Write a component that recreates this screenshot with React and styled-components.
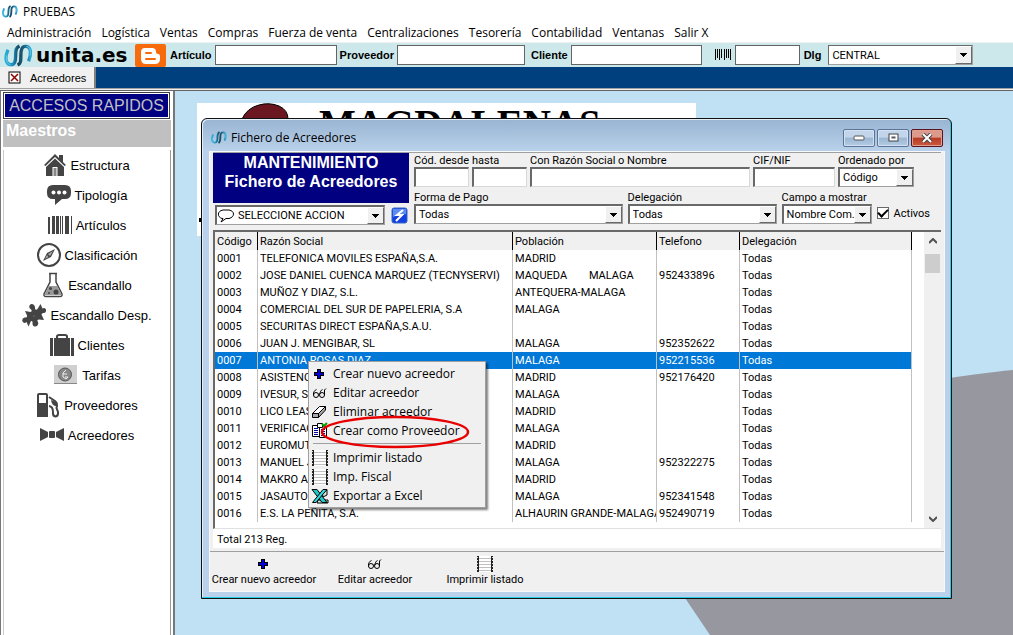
import React, { useState } from "react";
import styled, { createGlobalStyle } from "styled-components";

const ui = `"Open Sans", "Noto Sans", sans-serif`;
const arial = `"Liberation Sans", Arial, sans-serif`;
const small = `Roboto, ${arial}`;

const GlobalStyle = createGlobalStyle`
  * {
    box-sizing: border-box;
  }
  body {
    margin: 0;
    font-family: ${arial};
    font-size: 11px;
    color: #000;
    background: #fff;
  }
  button, input, select {
    font: inherit;
    color: inherit;
    margin: 0;
    border-radius: 0;
  }
  svg {
    display: block;
    flex: none;
  }
`;

const Page = styled.div`
  min-height: 100vh;
  display: flex;
  flex-direction: column;
  overflow: hidden;
`;

const TitleBar = styled.header`
  display: flex;
  align-items: center;
  gap: 5px;
  height: 23px;
  padding: 0 2px;
  font-family: ${ui};
  font-size: 12px;
`;

const MenuBar = styled.nav`
  display: flex;
  height: 20px;
  padding-left: 7px;
  gap: 10px;
  line-height: 19px;
  font-family: ${ui};
  font-size: 12px;
  border-bottom: 1px solid #f0f0f0;

  a {
    color: inherit;
    text-decoration: none;
    white-space: nowrap;
  }
`;

const ToolBar = styled.div`
  display: flex;
  align-items: center;
  height: 24px;
  padding-left: 4px;
  background: #cde8eb;
`;

const Brand = styled.span`
  width: 96px;
  margin: 0 3px;
  font-family: "DejaVu Sans", sans-serif;
  font-size: 20px;
  font-weight: bold;
  line-height: 20px;
`;

const Blogger = styled.a`
  margin-right: 4px;
`;

const SearchLabel = styled.label`
  display: flex;
  align-items: center;
  gap: 3px;
  margin-right: ${p => p.gap || 3}px;
  font-size: 11px;
  font-weight: bold;
`;

const SearchInput = styled.input`
  width: ${p => p.w}px;
  height: 20px;
  border: 1px solid #646464;
  background: #fff;
  padding: 0 4px;
`;

const SelectFrame = styled.span`
  display: flex;
  width: ${p => (p.w ? `${p.w}px` : "100%")};
  height: 20px;
  background: #fff;
  border: 1px solid;
  border-width: ${p => (p.flat ? "1px" : "2px 1px 1px 2px")};
  border-color: #696969 #a0a0a0 #a0a0a0 #696969;
  align-items: center;
`;

const SelectBox = styled.select`
  appearance: none;
  flex: 1;
  min-width: 0;
  height: 100%;
  border: 0;
  padding: 0 0 0 3px;
  background: transparent;
  font-family: ${small};
  outline: none;
`;

const SelectArrow = styled.span`
  width: 17px;
  height: 100%;
  display: flex;
  align-items: center;
  justify-content: center;
  background: #f0f0f0;
  border: 1px solid;
  border-color: #fff #696969 #696969 #fff;
`;

const TabBar = styled.div`
  display: flex;
  height: 21px;
  background: #00407f;
`;

const Tab = styled.button`
  display: flex;
  align-items: center;
  width: 96px;
  gap: 9px;
  padding: 0 0 0 8px;
  border: 0;
  border-right: 2px solid #808080;
  background: #f0f0f0;
  font-size: 11px;
`;

const Rule = styled.div`
  height: 3px;
  border: 1px solid;
  border-width: 1px 0;
  border-color: #a0a0a0 transparent #646464;
  background: #f0f0f0;
`;

const Body = styled.div`
  flex: 1;
  display: flex;
`;

const SideBar = styled.aside`
  width: 175px;
  flex: none;
  padding: 1px 0 0 2px;
  border: solid #777;
  border-width: 0 2px 0 1px;
`;

const SideTitle = styled.h1`
  margin: 0 3px 0 0;
  height: 27px;
  line-height: 26px;
  text-align: center;
  border: 1px solid #404040;
  box-shadow: inset 0 0 0 1px #fff;
  background: #000080;
  color: #c0c0c0;
  font-size: 16px;
  font-weight: normal;
  white-space: nowrap;
`;

const SideGroup = styled.h2`
  margin: 1px 2px 3px 0;
  height: 27px;
  padding: 2px 3px;
  line-height: 18px;
  background: #c0c0c0;
  color: #fff;
  font-size: 16px;
`;

const SideList = styled.div`
  display: flex;
  flex-direction: column;
  margin-right: 2px;
  min-height: 488px;
  border-right: 1px solid #999;
  border-left: 1px solid #ccc;
`;

const SideLink = styled.a`
  display: flex;
  align-items: center;
  justify-content: center;
  gap: 4px;
  height: 30px;
  color: #000;
  font-size: 13px;
  text-decoration: none;
`;

const Desktop = styled.main`
  flex: 1;
  position: relative;
  background: #bfe1f3;
`;

const Wallpaper = styled.svg`
  position: absolute;
  left: 0;
  top: 0;
`;

const Window = styled.section`
  position: absolute;
  left: 26px;
  right: 61px;
  top: 27px;
  padding: 0 6px 6px 7px;
  border: 1px solid #111;
  border-radius: 6px 6px 0 0;
  box-shadow: inset -1px -1px 0 #22cfe6, inset 1px 1px 0 #e4eef8;
  background: linear-gradient(#98b4d2, #b9d1ea 32px);
  font-family: ${small};
`;

const WindowTitle = styled.div`
  display: flex;
  align-items: center;
  gap: 4px;
  height: 32px;
  padding: 5px 0 0 2px;
  font-family: ${ui};
  font-size: 12px;

  span {
    flex: 1;
  }
`;

const WindowButton = styled.button`
  display: flex;
  align-items: center;
  justify-content: center;
  width: 32px;
  height: 18px;
  margin-left: -2px;
  margin-right: ${p => (p.close ? 2 : 0)}px;
  padding: 0;
  border: 1px solid ${p => (p.close ? "#5a1420" : "#5c7596")};
  border-radius: 2px;
  box-shadow: inset 0 0 0 1px ${p => (p.close ? "#e0a090" : "#d3e2f2")};
  background: ${p =>
    p.close
      ? "linear-gradient(#dc9a8c 45%, #b83a24 50%, #cc5a40)"
      : "linear-gradient(#c2d5ea 45%, #9bb6d3 50%, #b4cce4)"};
`;

const Client = styled.div`
  background: #f0f0f0;
  border: 1px solid #f8f8f8;
`;

const Filters = styled.div`
  display: flex;
  margin: 0 3px;
  padding-bottom: 5px;
  border-top: 1px solid #a0a0a0;
`;

const FilterHead = styled.div`
  width: 196px;
  flex: none;
`;

const Heading = styled.h2`
  margin: 0 0 2px;
  height: 50px;
  background: #000080;
  color: #fff;
  font-family: ${arial};
  font-size: 16px;
  line-height: 19px;
  text-align: center;
`;

const ActionRow = styled.div`
  display: flex;
  align-items: center;
  gap: 6px;
  padding-left: 2px;
`;

const IconButton = styled.button`
  padding: 0;
  border: 0;
  background: none;
`;

const FilterFields = styled.div`
  flex: 1;
  display: flex;
  flex-direction: column;
  gap: 5px;
  padding: 2px 27px 0 5px;
`;

const FilterRow = styled.div`
  display: flex;
  gap: ${p => p.gap}px;
  margin-right: ${p => (p.wide ? -16 : 0)}px;
`;

const Field = styled.label`
  display: flex;
  flex-direction: column;
  flex: ${p => (p.w ? "none" : 1)};
  width: ${p => (p.w ? `${p.w}px` : "auto")};
  min-width: 0;
  line-height: 12px;
  white-space: nowrap;
`;

const TextBox = styled.input`
  width: 100%;
  height: 20px;
  padding: 0 3px;
  background: #fff;
  border: 1px solid;
  border-width: 2px 1px 1px 2px;
  border-color: #696969 #d8d8d8 #d8d8d8 #696969;
`;

const Check = styled.label`
  display: flex;
  align-items: center;
  gap: 5px;
  padding-top: 10px;
`;

const CheckBox = styled.input`
  appearance: none;
  width: 12px;
  height: 12px;
  border: 1px solid #696969;
  background: #fff;
  display: grid;
  place-items: center;

  &:checked::before {
    content: "";
    width: 8px;
    height: 4px;
    border: solid #000;
    border-width: 0 0 2px 2px;
    transform: rotate(-45deg);
    margin-bottom: 3px;
  }
`;

const Grid = styled.div`
  display: flex;
  margin: 0 3px;
  height: 299px;
  border: solid #696969;
  border-width: 2px 0 0 2px;
  background: #fff;
  border-bottom: 1px solid #e0e0e0;
`;

const TableArea = styled.div`
  flex: 1;
  min-width: 0;
`;

const Table = styled.table`
  width: 100%;
  table-layout: fixed;
  border-collapse: separate;
  border-spacing: 0;

  th,
  td {
    height: 17px;
    padding: 0 0 0 2px;
    line-height: 17px;
    text-align: left;
    font-weight: normal;
    white-space: pre;
    overflow: hidden;
    border-right: 1px solid #c0c0c0;
  }

  th {
    height: 18px;
    background: #f0f0f0;
    border-right-color: #000;
  }
`;

const Row = styled.tr`
  color: ${p => (p.selected ? "#fff" : "#000")};
  background: ${p => (p.selected ? "#0078d7" : "transparent")};
`;

const ScrollBar = styled.div`
  display: flex;
  flex-direction: column;
  align-items: center;
  width: 17px;
  margin-left: 12px;
  padding: 6px 0;
  background: #f0f0f0;
`;

const Thumb = styled.div`
  width: 15px;
  height: 19px;
  margin: 10px 0 auto;
  background: #cdcdcd;
`;

const Total = styled.div`
  height: 19px;
  margin: 0 3px 3px;
  padding-left: 4px;
  line-height: 22px;
  background: #fff;
`;

const Actions = styled.div`
  display: flex;
  border-top: 1px solid #a0a0a0;
  padding: 3px 2px 4px 1px;
`;

const ActionButton = styled.button`
  display: flex;
  flex-direction: column;
  align-items: center;
  width: 106px;
  margin-right: ${p => p.gap}px;
  padding: 0;
  border: 0;
  background: none;
  line-height: 14px;
  white-space: nowrap;
`;

const ContextMenu = styled.div`
  position: absolute;
  left: 106px;
  top: 242px;
  width: 178px;
  padding: 2px;
  border: 1px solid #a0a0a0;
  box-shadow: 2px 2px 2px rgba(0, 0, 0, 0.5);
  background: #f0f0f0;
  font-family: ${ui};
  font-size: 12px;
`;

const MenuItem = styled.button`
  display: flex;
  align-items: center;
  gap: 4px;
  width: 100%;
  height: 19px;
  padding: 0;
  border: 0;
  background: none;
  white-space: nowrap;
`;

const Separator = styled.div`
  height: 1px;
  margin: 3px 2px 4px;
  background: #a0a0a0;
`;

const Mark = styled.svg`
  position: absolute;
  left: 11px;
  top: 53px;
`;

function Logo({ w, h, id }) {
  return (
    <svg width={w} height={h} viewBox="0 0 30 24">
      <defs>
        <linearGradient id={`${id}u`} x1="0" y1="0" x2="1" y2="0">
          <stop offset="0" stopColor="#2badd8" />
          <stop offset="0.5" stopColor="#1f8fbf" />
          <stop offset="1" stopColor="#123f57" />
        </linearGradient>
        <linearGradient id={`${id}n`} x1="0" y1="0" x2="1" y2="0">
          <stop offset="0" stopColor="#173f52" />
          <stop offset="0.5" stopColor="#1c6282" />
          <stop offset="1" stopColor="#2ba5d2" />
        </linearGradient>
      </defs>
      <path
        d="M4 6C1 13 1 21 6.500 21.500C11.500 22 12 17 12 12C12 6 12.500 3.500 16 2"
        fill="none"
        stroke={`url(#${id}u)`}
        strokeWidth="3.500"
      />
      <path
        d="M14 22C17.500 20.500 17.500 18 17.500 12C17.500 6 18.500 2 23 2.500C28.500 3 28.500 11 25.500 18"
        fill="none"
        stroke={`url(#${id}n)`}
        strokeWidth="3.500"
      />
      <path d="M3 12C2 17 3 21 6.500 21.500M27 12C28 7 27 3 23.500 2.500" fill="none" stroke="#6fd0ec" />
    </svg>
  );
}

const Down = () => (
  <svg width="7" height="4" shapeRendering="crispEdges">
    <path d="M0 0H7L3.500 4Z" />
  </svg>
);

function Select({ value, w, flat, icon, ...props }) {
  return (
    <SelectFrame w={w} flat={flat}>
      {icon}
      <SelectBox defaultValue={value} {...props}>
        <option>{value}</option>
      </SelectBox>
      <SelectArrow>
        <Down />
      </SelectArrow>
    </SelectFrame>
  );
}

const Balloon = () => (
  <svg width="18" height="15" viewBox="0 0 18 15" fill="#fff" stroke="#000">
    <path d="M5 10.500C0 9 0 3 6 2H12C18 3 18 9 12 10.500H9L4 14L6 10.500Z" />
  </svg>
);

const Plus = () => (
  <svg width="18" height="18" viewBox="4 0 18 18" shapeRendering="crispEdges">
    <path d="M10 4H14V7H17V11H14V14H10V11H7V7H10Z" fill="#000" />
    <path d="M11 5H13V8H16V10H13V13H11V10H8V8H11Z" fill="#0000d0" />
  </svg>
);

const Glasses = () => (
  <svg width="18" height="18" viewBox="4 0 18 18" fill="none" stroke="#000">
    <circle cx="9" cy="11" r="2.500" />
    <circle cx="15" cy="11" r="2.500" />
    <path d="M6.500 11C6 8 8 6 9.500 5.500M17.500 11V6L19 4.500M11.500 10H12.500M13 10C13 8 14 6 15.500 5.500" />
  </svg>
);

const Eraser = () => (
  <svg width="18" height="18" viewBox="4 0 18 18" stroke="#000">
    <path d="M5.500 10.500L12.500 3.500H18.500L11.500 10.500Z" fill="#fff" />
    <path d="M5.500 10.500H11.500V14.500H5.500ZM11.500 10.500L18.500 3.500V7L11.500 14.500Z" fill="#aaa" />
  </svg>
);

const Cards = () => (
  <svg width="18" height="18" viewBox="4 0 18 18">
    <path d="M5.500 3.500H12.500V14.500H5.500Z" fill="#fff" stroke="#000" />
    <path d="M12.500 4.500H19.500V15.500H12.500Z" fill="#fff" stroke="#000" />
    <path d="M7 6.500H11M7 8.500H11M7 10.500H11M7 12.500H11M14 7.500H18M14 9.500H18M14 11.500H18M14 13.500H18" stroke="#0000a0" />
    <path d="M10.500 1.500H15.500V5.500H10.500Z" fill="#fff" stroke="#000" />
    <path d="M15 2L17 4L20 1" fill="none" stroke="#00a000" strokeWidth="2" />
  </svg>
);

const Listing = () => (
  <svg width="18" height="18" viewBox="3 0 18 18" shapeRendering="crispEdges">
    <path d="M4 1H20V17H4Z" fill="#fff" />
    <path d="M6 3.500H18M6 6.500H18M6 9.500H18M6 12.500H18M6 15.500H18" stroke="#c0c0c0" />
    <path d="M4 1H6V17H4ZM18 1H20V17H18Z" fill="#222" />
    <path d="M4.500 2V17M19.500 2V17" stroke="#ddd" strokeDasharray="1 2" />
  </svg>
);

const Excel = () => (
  <svg width="18" height="18" viewBox="3 0 18 18">
    <path d="M10 13H20V16H9ZM14 5L19 3V8L15 10Z" fill="#d8e4e0" stroke="#000" />
    <path d="M4 2.500H9L19 15.500H14Z" fill="#20c8c8" stroke="#000" />
    <path d="M15 2.500H19L8 15.500H4.500Z" fill="#30dada" stroke="#000" />
  </svg>
);

const ink = "#444";

const House = () => (
  <svg width="22" height="24" viewBox="0 0 22 24" fill={ink}>
    <path d="M15 2H19V9L22 12L20.500 13L11 4L1.500 13L0 12L11 1L15 5Z" />
    <path d="M2 14L11 5.500L20 14V23H13.500V14H8.500V23H2Z" />
    <path d="M9.500 15H12.500V23H9.500Z" fill="#888" />
  </svg>
);

const Chat = () => (
  <svg width="24" height="24" viewBox="0 0 24 24" fill={ink}>
    <path d="M6 2H18Q24 2 24 8V10Q24 16 18 16H15L8 22V16H6Q0 16 0 10V8Q0 2 6 2Z" />
    <g fill="#fff">
      <circle cx="6.500" cy="9.500" r="2" />
      <circle cx="12" cy="9.500" r="2" />
      <circle cx="17.500" cy="9.500" r="2" />
    </g>
  </svg>
);

const Bars = () => (
  <svg width="24" height="24" viewBox="0 0 24 24" fill={ink} shapeRendering="crispEdges">
    <path d="M0 4H2V21H0ZM4 3H7V21H4ZM8 3H11V21H8ZM12 3H13V21H12ZM14 3H15V21H14ZM17 3H21V21H17ZM23 3H24V21H23Z" />
  </svg>
);

const Compass = () => (
  <svg width="24" height="24" viewBox="0 0 24 24">
    <circle cx="12" cy="12" r="11" fill="#fff" stroke={ink} strokeWidth="2" />
    <path d="M18 6L14 14L6 18L10 10Z" fill={ink} />
    <path d="M16 8L11 11L13 13ZM8 16L10 12L11.500 14Z" fill="#aaa" />
  </svg>
);

const Flask = () => (
  <svg width="22" height="26" viewBox="0 0 22 26">
    <path d="M8 2V10L2 22Q1.500 24.500 4 24.500H18Q20.500 24.500 20 22L14 10V2" fill="#fff" stroke={ink} strokeWidth="1.500" />
    <path d="M6.500 14H15.500L19.500 23H2.500Z" fill="#999" />
    <path d="M7 1.500H15" stroke={ink} strokeWidth="1.500" />
    <g fill={ink}>
      <circle cx="8.500" cy="16.500" r="1.500" />
      <circle cx="14" cy="20" r="2.500" />
      <circle cx="7" cy="21" r="1" />
    </g>
  </svg>
);

const Puzzle = () => (
  <svg width="24" height="24" viewBox="0 0 24 24" fill={ink}>
    <path d="M3 8L8.500 9Q10.500 8 9 6.500Q6.500 5 7.500 2.500Q9.500 0 12 2Q13.500 4 13 6Q14 7.500 15.500 6L18.500 1L20.500 5.500Q23 4 24 6.500Q24.500 9.500 22 10Q20 9.500 19.500 11.500L22 17L16.500 16.500Q14.500 17 16 19Q17 22 14 23.500Q10.500 24 10.500 20.500Q11 17.500 9 18L6.500 23.500L4.500 19Q2 21 0.500 18.500Q-0.500 15.500 2.500 14.500Q5.500 15 5 12.500Z" />
    <path d="M10.500 12.500L13 11.500L13.500 14L11 14.500Z" fill="#555" />
  </svg>
);

const Suitcase = () => (
  <svg width="24" height="24" viewBox="0 0 24 24" fill={ink}>
    <path d="M0 5H3V23H0ZM4 5H20V23H4ZM21 5H24V23H21Z" />
    <path d="M7 5V3.500Q7 2 9 2H15Q17 2 17 3.500V5" fill="none" stroke={ink} strokeWidth="2" />
  </svg>
);

const Coin = () => (
  <svg width="25" height="20" viewBox="0 0 25 20">
    <path d="M1 0H24V18H1Z" fill="#d0d0d0" />
    <path d="M1 18.500H24" stroke="#888" />
    <circle cx="12" cy="9.500" r="6.500" fill="#888" stroke="#555" />
    <path d="M13 5L10 8V12L13 14L15 12H12M10 9H14" fill="none" stroke="#eee" />
  </svg>
);

const Pump = () => (
  <svg width="24" height="26" viewBox="0 0 24 26">
    <path d="M1 3Q1 1 3 1H10Q12 1 12 3V25H1Z" fill={ink} />
    <path d="M3 3H10V11H3Z" fill="#fff" />
    <path d="M13 5L19 9Q22 11 20.500 16L22 20Q22.500 24 19.500 24.500Q16.500 24 17 20Q17 14.500 13 14" fill="none" stroke={ink} strokeWidth="2" />
    <path d="M15 8L20 10V14Q16 14 15 8Z" fill={ink} />
  </svg>
);

const Bow = () => (
  <svg width="24" height="24" viewBox="0 0 24 24" fill={ink}>
    <path d="M0 5L8 9V14L0 18ZM24 5L16 9V14L24 18Z" />
    <rect x="9" y="8" width="6" height="7" rx="1" />
  </svg>
);

const menus = [
  "Administración",
  "Logística",
  "Ventas",
  "Compras",
  "Fuerza de venta",
  "Centralizaciones",
  "Tesorería",
  "Contabilidad",
  "Ventanas",
  "Salir X"
];

const shortcuts = [
  ["Estructura", House],
  ["Tipología", Chat],
  ["Artículos", Bars],
  ["Clasificación", Compass],
  ["Escandallo", Flask],
  ["Escandallo Desp.", Puzzle],
  ["Clientes", Suitcase],
  ["Tarifas", Coin],
  ["Proveedores", Pump],
  ["Acreedores", Bow]
];

const rows = [
  ["0001", "TELEFONICA MOVILES ESPAÑA,S.A.", "MADRID", ""],
  ["0002", "JOSE DANIEL CUENCA MARQUEZ (TECNYSERVI)", "MAQUEDA        MALAGA", "952433896"],
  ["0003", "MUÑOZ Y DIAZ, S.L.", "ANTEQUERA-MALAGA", ""],
  ["0004", "COMERCIAL DEL SUR DE PAPELERIA, S.A", "MALAGA", ""],
  ["0005", "SECURITAS DIRECT ESPAÑA,S.A.U.", "", ""],
  ["0006", "JUAN J. MENGIBAR, SL", "MALAGA", "952352622"],
  ["0007", "ANTONIA ROSAS DIAZ", "MALAGA", "952215536"],
  ["0008", "ASISTENC", "MADRID", "952176420"],
  ["0009", "IVESUR, S", "MALAGA", ""],
  ["0010", "LICO LEAS", "MADRID", ""],
  ["0011", "VERIFICAC", "MALAGA", ""],
  ["0012", "EUROMUT", "MADRID", ""],
  ["0013", "MANUEL J", "MALAGA", "952322275"],
  ["0014", "MAKRO A", "MADRID", ""],
  ["0015", "JASAUTO", "MALAGA", "952341548"],
  ["0016", "E.S. LA PEÑITA, S.A.", "ALHAURIN GRANDE-MALAGA", "952490719"]
];

function Suppliers() {
  const [selected, setSelected] = useState("0007");
  return (
    <Grid>
      <TableArea>
        <Table>
          <colgroup>
            <col style={{ width: 43 }} />
            <col style={{ width: 255 }} />
            <col style={{ width: 144 }} />
            <col style={{ width: 83 }} />
            <col />
          </colgroup>
          <thead>
            <tr>
              <th>Código</th>
              <th>Razón Social</th>
              <th>Población</th>
              <th>Telefono</th>
              <th>Delegación</th>
            </tr>
          </thead>
          <tbody>
            {rows.map(([code, name, town, phone]) => (
              <Row key={code} selected={code === selected} onClick={() => setSelected(code)}>
                <td>{code}</td>
                <td>{name}</td>
                <td>{town}</td>
                <td>{phone}</td>
                <td>Todas</td>
              </Row>
            ))}
          </tbody>
        </Table>
      </TableArea>
      <ScrollBar>
        <svg width="8" height="6" fill="none" stroke="#505050" strokeWidth="2">
          <path d="M0 5L4 1L8 5" />
        </svg>
        <Thumb />
        <svg width="8" height="6" fill="none" stroke="#505050" strokeWidth="2">
          <path d="M0 1L4 5L8 1" />
        </svg>
      </ScrollBar>
    </Grid>
  );
}

function Popup() {
  return (
    <ContextMenu>
      <MenuItem><Plus />Crear nuevo acreedor</MenuItem>
      <MenuItem><Glasses />Editar acreedor</MenuItem>
      <MenuItem><Eraser />Eliminar acreedor</MenuItem>
      <MenuItem><Cards />Crear como Proveedor</MenuItem>
      <Separator />
      <MenuItem><Listing />Imprimir listado</MenuItem>
      <MenuItem><Listing />Imp. Fiscal</MenuItem>
      <MenuItem><Excel />Exportar a Excel</MenuItem>
      <Mark width="150" height="34" fill="none" stroke="#e80000" strokeWidth="2.500">
        <ellipse cx="75" cy="17" rx="73" ry="15" />
      </Mark>
    </ContextMenu>
  );
}

function SupplierWindow() {
  return (
    <Window>
      <WindowTitle>
        <Logo w={16} h={15} id="win" />
        <span>Fichero de Acreedores</span>
        <WindowButton aria-label="Minimizar">
          <svg width="12" height="6">
            <rect x="1" y="1" width="10" height="4" rx="1" fill="#fff" stroke="#555" />
          </svg>
        </WindowButton>
        <WindowButton aria-label="Maximizar">
          <svg width="11" height="9" fill="none">
            <rect x="1" y="1" width="9" height="7" fill="#fff" stroke="#444" />
            <rect x="4" y="4" width="3" height="1" stroke="#556" />
          </svg>
        </WindowButton>
        <WindowButton close aria-label="Cerrar">
          <svg width="12" height="10">
            <path d="M2 1L10 9M10 1L2 9" stroke="#444" strokeWidth="4" />
            <path d="M2 1L10 9M10 1L2 9" stroke="#fff" strokeWidth="2" />
          </svg>
        </WindowButton>
      </WindowTitle>
      <Client>
        <Filters>
          <FilterHead>
            <Heading>
              MANTENIMIENTO
              <br />
              Fichero de Acreedores
            </Heading>
            <ActionRow>
              <Select w={170} value="SELECCIONE ACCION" icon={<Balloon />} aria-label="Acción" />
              <IconButton aria-label="Ejecutar">
                <svg width="17" height="17" viewBox="0 0 17 17">
                  <rect x="1" y="1" width="15" height="15" rx="2" fill="#1440e0" stroke="#3468c8" />
                  <path d="M2 2H15V7Q8 7 2 10Z" fill="#5c8cf0" />
                  <path d="M12 3L6 8H11L5 14" fill="none" stroke="#fff" strokeWidth="2" />
                </svg>
              </IconButton>
            </ActionRow>
          </FilterHead>
          <FilterFields>
            <FilterRow gap={3}>
              <Field w={55}>Cód. desde<TextBox /></Field>
              <Field w={55}>hasta<TextBox /></Field>
              <Field>Con Razón Social o Nombre<TextBox /></Field>
              <Field w={82}>CIF/NIF<TextBox /></Field>
              <Field w={76}>Ordenado por<Select value="Código" /></Field>
            </FilterRow>
            <FilterRow gap={5} wide>
              <Field>Forma de Pago<Select value="Todas" /></Field>
              <Field w={149}>Delegación<Select value="Todas" /></Field>
              <Field w={90}>Campo a mostrar<Select value="Nombre Com." /></Field>
              <Check>
                <CheckBox type="checkbox" defaultChecked />
                Activos
              </Check>
            </FilterRow>
          </FilterFields>
        </Filters>
        <Suppliers />
        <Total>Total 213 Reg.</Total>
        <Actions>
          <ActionButton gap={5}><Plus />Crear nuevo acreedor</ActionButton>
          <ActionButton gap={4}><Glasses />Editar acreedor</ActionButton>
          <ActionButton gap={0}><Listing />Imprimir listado</ActionButton>
        </Actions>
      </Client>
      <Popup />
    </Window>
  );
}

export default function App() {
  return (
    <Page>
      <GlobalStyle />
      <TitleBar>
        <Logo w={16} h={15} id="app" />
        PRUEBAS
      </TitleBar>
      <MenuBar>
        {menus.map(m => (
          <a key={m} href="#">{m}</a>
        ))}
      </MenuBar>
      <ToolBar>
        <Logo w={29} h={23} id="big" />
        <Brand>unita.es</Brand>
        <Blogger href="#" aria-label="Blog">
          <svg width="31" height="23" viewBox="0 0 31 23">
            <rect width="31" height="23" rx="2" fill="#f76b0c" />
            <path d="M10 4H17Q21 4 21 8Q21 10 23 10Q25 10 25 12V15Q25 20 20 20H11Q6 20 6 15V8Q6 4 10 4Z" fill="#fff" />
            <path d="M11 9H16M11 15H20" stroke="#f76b0c" strokeWidth="2" strokeLinecap="round" />
          </svg>
        </Blogger>
        <SearchLabel>Artículo<SearchInput w={122} /></SearchLabel>
        <SearchLabel gap={6}>Proveedor<SearchInput w={128} /></SearchLabel>
        <SearchLabel gap={13}>Cliente<SearchInput w={131} /></SearchLabel>
        <SearchLabel gap={4}>
          <svg width="17" height="12" shapeRendering="crispEdges">
            <path d="M0 0H1V11H0ZM2 0H3V9H2ZM4 0H5V11H4ZM6 0H7V9H6ZM9 0H10V11H9ZM11 0H12V9H11ZM13 0H14V9H13ZM15 0H16V11H15Z" />
          </svg>
          <SearchInput w={65} aria-label="Código de barras" />
        </SearchLabel>
        <SearchLabel as="span" gap={7}>Dlg</SearchLabel>
        <Select flat w={145} value="CENTRAL" aria-label="Dlg" />
      </ToolBar>
      <TabBar>
        <Tab>
          <svg width="13" height="13">
            <rect x="1" y="1" width="11" height="11" fill="#fff" stroke="#000" strokeWidth="1" />
            <path d="M3 3L10 10M10 3L3 10" stroke="#900000" strokeWidth="1.500" />
          </svg>
          Acreedores
        </Tab>
      </TabBar>
      <Rule />
      <Body>
        <SideBar>
          <SideTitle>ACCESOS RAPIDOS</SideTitle>
          <SideGroup>Maestros</SideGroup>
          <SideList>
            {shortcuts.map(([name, Icon]) => (
              <SideLink key={name} href="#">
                <Icon />
                {name}
              </SideLink>
            ))}
          </SideList>
        </SideBar>
        <Desktop>
          <Wallpaper width="838" height="544">
            <path d="M510 507L535 544H838V279Q806 282 740 292V507Z" fill="#9797a0" />
            <path d="M22 12H521V145H22Z" fill="#fff" />
            <path d="M67 28Q72 17 84 14Q94 11 104 15Q113 19 113 28Z" fill="#6b1722" stroke="#000" />
            <text x="144" y="46" fontFamily="Liberation Serif, serif" fontWeight="bold" fontSize="39">
              MAGDALENAS
            </text>
            <rect x="24" y="127" width="3" height="4" />
          </Wallpaper>
          <SupplierWindow />
        </Desktop>
      </Body>
    </Page>
  );
}
